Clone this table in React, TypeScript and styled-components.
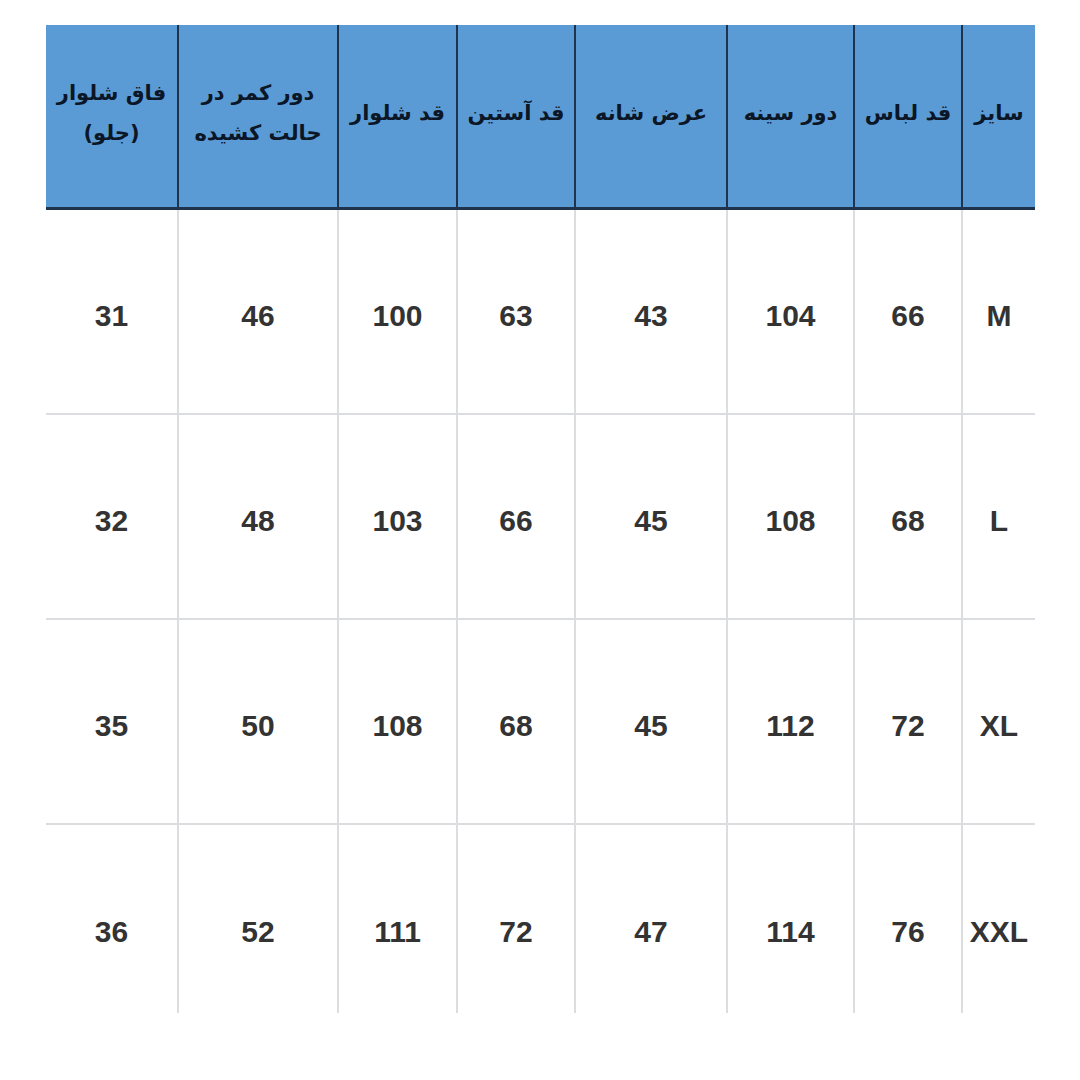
import styled, { createGlobalStyle } from "styled-components";

const GlobalStyle = createGlobalStyle`
  html, body {
    margin: 0;
    padding: 0;
    background: #ffffff;
  }
`;

// column widths, right to left (table is rtl)
const colWidths = [74, 108, 127, 152, 118, 119, 160, 131];
const gridCols = colWidths.map(w => w + 'px').join(' ');

const headers = [
  'سایز',
  'قد لباس',
  'دور سینه',
  'عرض شانه',
  'قد آستین',
  'قد شلوار',
  'دور کمر در\nحالت کشیده',
  'فاق شلوار\n(جلو)',
];

const rows = [
  ['M', '66', '104', '43', '63', '100', '46', '31'],
  ['L', '68', '108', '45', '66', '103', '48', '32'],
  ['XL', '72', '112', '45', '68', '108', '50', '35'],
  ['XXL', '76', '114', '47', '72', '111', '52', '36'],
];

const Page = styled.div`
  width: 1080px;
  height: 1080px;
  padding: 25px 0 0 46px;
  box-sizing: border-box;
`;

const Table = styled.div`
  direction: rtl;
  width: 989px;
  height: 988px;
  overflow: hidden;
`;

const HeaderRow = styled.div`
  display: grid;
  grid-template-columns: ${gridCols};
  height: 185px;
  background: #5b9bd5;
  border-bottom: 3px solid #1f344c;
  box-sizing: border-box;
`;

const HeaderCell = styled.div<{ $last: boolean }>`
  display: flex;
  align-items: center;
  justify-content: center;
  text-align: center;
  white-space: pre-line;
  font-family: "DejaVu Sans", "Noto Sans", sans-serif;
  font-weight: bold;
  font-size: 21px;
  line-height: 40px;
  color: #0b1626;
  border-inline-end: ${p => (p.$last ? 'none' : '2px solid #1f344c')};
  box-sizing: border-box;
  padding-bottom: 6px;
`;

const BodyRow = styled.div<{ $last: boolean }>`
  display: grid;
  grid-template-columns: ${gridCols};
  height: 205px;
  border-bottom: ${p => (p.$last ? 'none' : '2px solid #dcdde1')};
  box-sizing: border-box;
`;

const BodyCell = styled.div<{ $last: boolean }>`
  display: flex;
  align-items: center;
  justify-content: center;
  padding-top: 8px;
  font-family: "Liberation Sans", Arial, sans-serif;
  font-weight: bold;
  font-size: 30px;
  color: #333333;
  border-inline-end: ${p => (p.$last ? 'none' : '2px solid #dcdde1')};
  box-sizing: border-box;
`;

export default function App() {
  return (
    <>
      <GlobalStyle />
      <Page>
        <Table>
          <HeaderRow>
            {headers.map((h, i) => (
              <HeaderCell key={i} $last={i === headers.length - 1}>{h}</HeaderCell>
            ))}
          </HeaderRow>
          {rows.map((row, r) => (
            <BodyRow key={r} $last={r === rows.length - 1}>
              {row.map((v, i) => (
                <BodyCell key={i} $last={i === row.length - 1}>{v}</BodyCell>
              ))}
            </BodyRow>
          ))}
        </Table>
      </Page>
    </>
  );
}
